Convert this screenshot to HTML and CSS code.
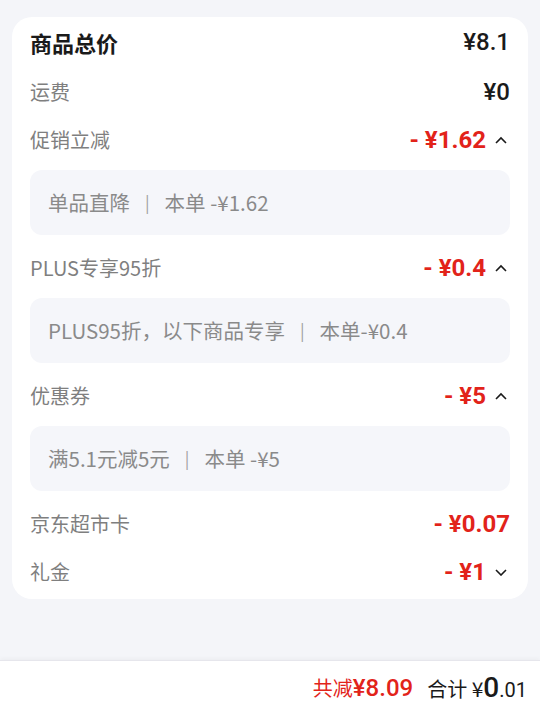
FILE: index.html
```html
<!DOCTYPE html>
<html lang="zh-CN">
<head>
    <meta charset="UTF-8">
    <meta name="viewport" content="width=device-width, initial-scale=1.0">
    <title>价格明细</title>
    <link rel="stylesheet" href="styles.css">
</head>
<body>
    <div class="page">
        <section class="card">
            <div class="row row-total">
                <span class="label-main">商品总价</span>
                <span class="amount-main">¥8.1</span>
            </div>
            <div class="row">
                <span class="label">运费</span>
                <span class="amount-main">¥0</span>
            </div>

            <!-- 促销 -->
            <div class="row">
                <span class="label">促销立减</span>
                <span class="amount-wrap">
                    <span class="amount-red">- ¥1.62</span>
                    <svg class="chev" viewBox="0 0 12 8"><path d="M1 7 L6 2 L11 7" /></svg>
                </span>
            </div>
            <div class="detail">单品直降<span class="sep">|</span>本单 -¥1.62</div>

            <div class="row">
                <span class="label">PLUS专享95折</span>
                <span class="amount-wrap">
                    <span class="amount-red">- ¥0.4</span>
                    <svg class="chev" viewBox="0 0 12 8"><path d="M1 7 L6 2 L11 7" /></svg>
                </span>
            </div>
            <div class="detail">PLUS95折，以下商品专享<span class="sep">|</span>本单-¥0.4</div>

            <div class="row">
                <span class="label">优惠券</span>
                <span class="amount-wrap">
                    <span class="amount-red">- ¥5</span>
                    <svg class="chev" viewBox="0 0 12 8"><path d="M1 7 L6 2 L11 7" /></svg>
                </span>
            </div>
            <div class="detail">满5.1元减5元<span class="sep">|</span>本单 -¥5</div>

            <div class="row">
                <span class="label">京东超市卡</span>
                <span class="amount-red">- ¥0.07</span>
            </div>
            <div class="row">
                <span class="label">礼金</span>
                <span class="amount-wrap">
                    <span class="amount-red">- ¥1</span>
                    <svg class="chev" viewBox="0 0 12 8"><path d="M1 2 L6 7 L11 2" /></svg>
                </span>
            </div>
        </section>
    </div>
    <footer class="bar">
        <span class="saved">共减<b>¥8.09</b></span>
        <span class="sum">合计 <span class="yen">¥</span><span class="big">0</span><span class="small">.01</span></span>
    </footer>
</body>
</html>
```

FILE: styles.css
```css
body {
    margin: 0;
    padding: 0;
    background: #f4f5f9;
    font-family: "Noto Sans CJK SC", "Noto Sans", sans-serif;
    min-height: 714px;
    display: flex;
    flex-direction: column;
}
.page {
    flex: 1;
    padding: 17px 12px 0;
}
.card {
    background: #fff;
    border-radius: 20px;
    padding: 3px 18px 2px;
}
.row {
    box-sizing: border-box;
    height: 48px;
    padding-bottom: 3px;
    display: flex;
    justify-content: space-between;
    align-items: center;
}
.row-total {
    height: 49px;
    padding-bottom: 5px;
}
.label-main {
    font-size: 22px;
    font-weight: bold;
    color: #1a1a1a;
}
.label {
    font-size: 20px;
    color: #7f7f7f;
}
.amount-main {
    font-family: Roboto, "Noto Sans", sans-serif;
    font-size: 24px;
    font-weight: 500;
    color: #1a1a1a;
}
.amount-wrap {
    display: flex;
    align-items: center;
}
.amount-red {
    font-family: Roboto, "Noto Sans", sans-serif;
    font-size: 24px;
    font-weight: bold;
    color: #e2231a;
}
.chev {
    width: 12px;
    height: 8px;
    margin-left: 9px;
    margin-right: 3px;
    fill: none;
    stroke: #1a1a1a;
    stroke-width: 1.6;
}
.detail {
    height: 65px;
    margin: 5px 0 10px;
    background: #f5f6fa;
    border-radius: 12px;
    padding: 0 18px 2px;
    box-sizing: border-box;
    display: flex;
    align-items: center;
    font-size: 20.5px;
    color: #8a8a8a;
}
.sep {
    margin: 0 15px;
    color: #a0a0a0;
    font-size: 17px;
}
.bar {
    height: 53px;
    background: #fff;
    border-top: 1px solid #e6e6ec;
    box-shadow: 0 -2px 4px rgba(0, 0, 0, 0.03);
    display: flex;
    justify-content: flex-end;
    align-items: center;
    padding-right: 13px;
    gap: 14px;
}
.saved {
    color: #e2231a;
    font-size: 20px;
}
.saved b {
    font-family: Roboto, "Noto Sans", sans-serif;
    font-size: 24px;
    font-weight: 500;
}
.sum {
    font-size: 20px;
    color: #1a1a1a;
}
.yen {
    font-size: 21px;
}
.big {
    font-family: Roboto, "Noto Sans", sans-serif;
    font-size: 28px;
    font-weight: 500;
}
.small {
    font-family: Roboto, "Noto Sans", sans-serif;
    font-size: 20px;
}
```
